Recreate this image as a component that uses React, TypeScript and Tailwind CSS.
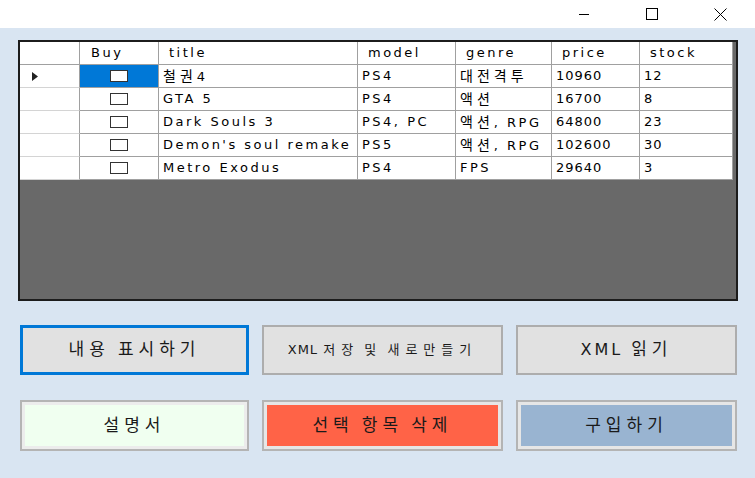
import React from 'react';

interface Game {
  title: string;
  model: string;
  genre: string;
  price: number;
  stock: number;
}

const games: Game[] = [
  { title: '철권4', model: 'PS4', genre: '대전격투', price: 10960, stock: 12 },
  { title: 'GTA 5', model: 'PS4', genre: '액션', price: 16700, stock: 8 },
  { title: 'Dark Souls 3', model: 'PS4, PC', genre: '액션, RPG', price: 64800, stock: 23 },
  { title: "Demon's soul remake", model: 'PS5', genre: '액션, RPG', price: 102600, stock: 30 },
  { title: 'Metro Exodus', model: 'PS4', genre: 'FPS', price: 29640, stock: 3 },
];

const columns = [
  { key: 'title', width: 'w-[199px]' },
  { key: 'model', width: 'w-[98px]' },
  { key: 'genre', width: 'w-[96px]' },
  { key: 'price', width: 'w-[88px]' },
  { key: 'stock', width: 'w-[93px]' },
] as const;

// korean runs get wider spacing, like the GDI rendering in the shot
function Txt({ text, k }: { text: string; k: string }) {
  return (
    <span className="whitespace-pre">
      {text.split(/([가-힣]+)/).map((part, i) =>
        /[가-힣]/.test(part) ? (
          <span key={i} className={k}>
            {part}
          </span>
        ) : (
          <React.Fragment key={i}>{part}</React.Fragment>
        )
      )}
    </span>
  );
}

function TitleBar() {
  return (
    <div className="h-[28px] bg-white flex justify-end">
      <div className="w-[68px] flex items-center justify-center">
        <svg width="12" height="12" viewBox="0 0 12 12">
          <line x1="1" y1="6.5" x2="11" y2="6.5" stroke="#000" strokeWidth="1" />
        </svg>
      </div>
      <div className="w-[68px] flex items-center justify-center">
        <svg width="12" height="12" viewBox="0 0 12 12">
          <rect x="0.5" y="0.5" width="11" height="11" fill="none" stroke="#000" strokeWidth="1" />
        </svg>
      </div>
      <div className="w-[68px] flex items-center justify-center mr-[1px]">
        <svg width="13" height="13" viewBox="0 0 13 13">
          <path d="M0.5 0.5 L12.5 12.5 M12.5 0.5 L0.5 12.5" stroke="#000" strokeWidth="1" />
        </svg>
      </div>
    </div>
  );
}

function Grid() {
  return (
    <div className="w-[720px] h-[261px] border-2 border-[#1c1c1c] bg-[#696969] font-['DejaVu_Sans','Noto_Sans_CJK_KR',sans-serif] text-[13px] tracking-[2.5px] text-black">
      {/* header */}
      <div className="flex h-[23px] w-[713px] bg-white border-b border-[#a0a0a0]">
        <div className="w-[60px] h-full border-r border-[#a0a0a0]" />
        <div className="w-[79px] h-full border-r border-[#a0a0a0] pl-[11px] flex items-center">Buy</div>
        {columns.map(col => (
          <div key={col.key} className={`${col.width} h-full border-r border-[#a0a0a0] pl-[10px] flex items-center`}>
            {col.key}
          </div>
        ))}
      </div>

      {/* rows */}
      {games.map((g, index) => (
        <div key={g.title} className="flex h-[23px] w-[713px] bg-white">
          <div className="w-[60px] h-full border-r border-b border-r-[#a0a0a0] border-b-[#d4d4d4] flex items-center pl-[12px]">
            {index === 0 && (
              <svg width="6" height="9" viewBox="0 0 6 9">
                <path d="M0 0 L6 4.5 L0 9 Z" fill="#222" />
              </svg>
            )}
          </div>
          <div
            className={`w-[79px] h-full border-r border-b border-[#a0a0a0] flex items-center justify-center ${
              index === 0 ? 'bg-[#0078d7]' : 'bg-white'
            }`}
          >
            <div className="w-[18px] h-[12px] border border-[#333] bg-white" />
          </div>
          <div className="w-[199px] h-full border-r border-b border-[#a0a0a0] pl-[4px] flex items-center overflow-hidden">
            <Txt text={g.title} k="text-[14px] tracking-[4px]" />
          </div>
          <div className="w-[98px] h-full border-r border-b border-[#a0a0a0] pl-[4px] flex items-center whitespace-nowrap">
            {g.model}
          </div>
          <div className="w-[96px] h-full border-r border-b border-[#a0a0a0] pl-[4px] flex items-center overflow-hidden">
            <Txt text={g.genre} k="text-[14px] tracking-[4px]" />
          </div>
          <div className="w-[88px] h-full border-r border-b border-[#a0a0a0] pl-[4px] flex items-center tracking-[1px]">
            {g.price}
          </div>
          <div className="w-[93px] h-full border-r border-b border-[#a0a0a0] pl-[4px] flex items-center tracking-[1px]">
            {g.stock}
          </div>
        </div>
      ))}
    </div>
  );
}

export default function App() {
  return (
    <div className="w-[755px] h-[478px] bg-[#d9e5f2] overflow-hidden">
      <TitleBar />

      <div className="pt-[12px] pl-[18px] flex flex-col">
        <Grid />

        {/* button rows */}
        <div className="font-['DejaVu_Sans','Noto_Sans_CJK_KR',sans-serif] text-[#1a1a1a] ml-[2px]">
          <div className="flex gap-[13px] mt-[24px]">
            <button className="w-[229px] h-[50px] bg-[#e1e1e1] border-[3px] border-[#0078d7] text-[16px] tracking-[3px] flex items-center justify-center">
              <Txt text="내용 표시하기" k="text-[17px] tracking-[5px]" />
            </button>
            <button className="w-[241px] h-[50px] bg-[#e1e1e1] border-2 border-[#adadad] text-[13px] tracking-[1px] flex items-center justify-center">
              <Txt text="XML 저장 및 새로만들기" k="tracking-[6px]" />
            </button>
            <button className="w-[221px] h-[50px] bg-[#e1e1e1] border-2 border-[#adadad] text-[16px] tracking-[3px] flex items-center justify-center">
              <Txt text="XML 읽기" k="text-[17px] tracking-[5px]" />
            </button>
          </div>

          <div className="flex gap-[13px] mt-[25px]">
            <button className="w-[229px] h-[51px] bg-[#f0fff0] border-2 border-[#b4b4b4] shadow-[inset_0_0_0_3px_#ececec] text-[16px] tracking-[3px] flex items-center justify-center">
              <Txt text="설명서" k="text-[17px] tracking-[5px]" />
            </button>
            <button className="w-[241px] h-[51px] bg-[#ff6347] border-2 border-[#b4b4b4] shadow-[inset_0_0_0_3px_#e6e6e6] text-[16px] tracking-[3px] flex items-center justify-center">
              <Txt text="선택 항목 삭제" k="text-[17px] tracking-[5px]" />
            </button>
            <button className="w-[221px] h-[51px] bg-[#99b4d1] border-2 border-[#b4b4b4] shadow-[inset_0_0_0_3px_#e6e6e6] text-[16px] tracking-[3px] flex items-center justify-center">
              <Txt text="구입하기" k="text-[17px] tracking-[5px]" />
            </button>
          </div>
        </div>
      </div>
    </div>
  );
}
